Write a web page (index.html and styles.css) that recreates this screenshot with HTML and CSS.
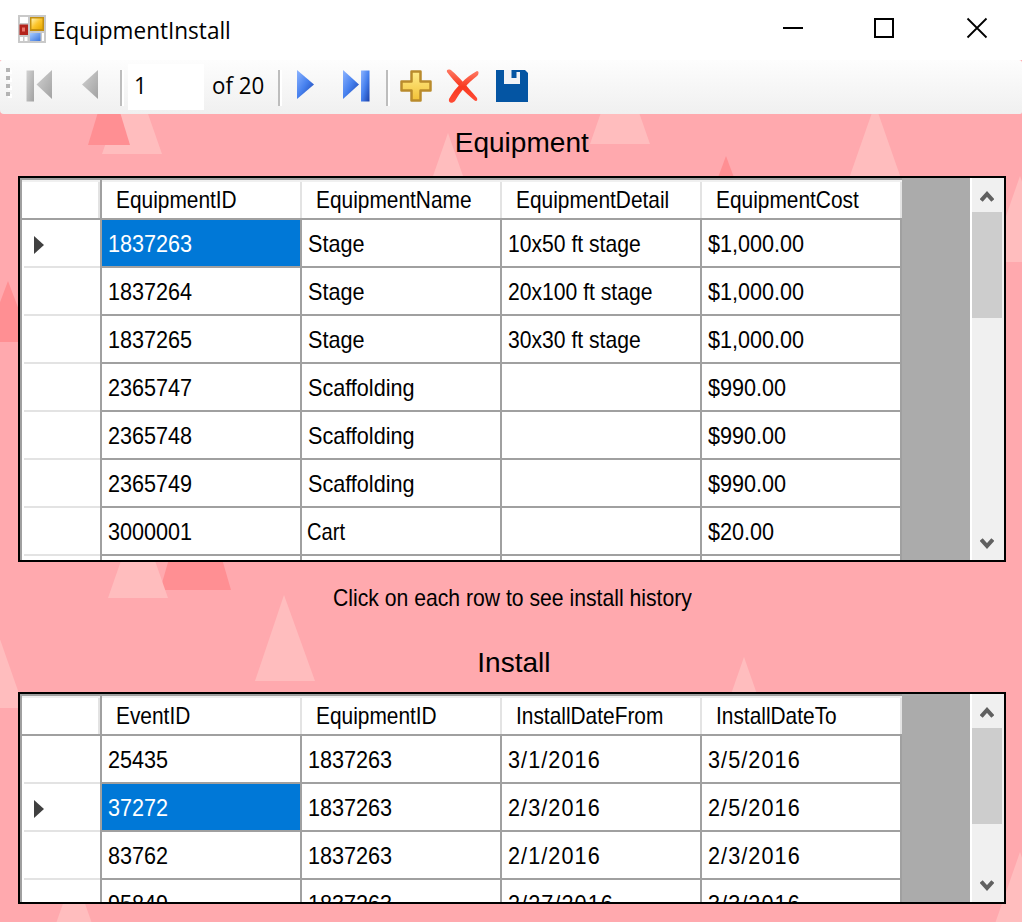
FILE: index.html
```html
<!DOCTYPE html>
<html lang="en">
<head>
<meta charset="utf-8">
<title>EquipmentInstall</title>
<link rel="stylesheet" href="styles.css">
</head>
<body>
<div class="window">
  <svg class="backdrop" width="1022" height="922" viewBox="0 0 1022 922" aria-hidden="true">
    <g fill="#ffbdbe">
      <path d="M132 68L162 154H102Z"/><path d="M448 133L478 219H418Z"/><path d="M620 58L650 144H590Z"/>
      <path d="M875 104L905 190H845Z"/><path d="M1020 176L1050 262H990Z"/><path d="M-6 622L24 708H-36Z"/>
      <path d="M284 595L315 681H255Z"/><path d="M744 657L774 743H714Z"/><path d="M74 872L104 958H44Z"/>
      <path d="M1020 852L1050 938H990Z"/>
    </g>
    <g fill="#ff8f93">
      <path d="M109 76L130 145H88Z"/><path d="M726 156L746 210H706Z"/><path d="M8 281L31 342H-15Z"/>
      <path d="M195.500 467L231 590H160Z"/>
    </g>
    <path fill="#ffbdbe" d="M138 512L168 598H108Z"/>
  </svg>

  <header class="titlebar">
    <svg class="app-icon" width="28" height="28" viewBox="0 0 28 28">
      <defs>
        <linearGradient id="gold" x2="1" y2="1"><stop offset="0" stop-color="#fff3b0"/><stop offset=".5" stop-color="#fcc52c"/><stop offset="1" stop-color="#e5a800"/></linearGradient>
        <linearGradient id="sky" x2="1" y2="1"><stop offset="0" stop-color="#a8ccff"/><stop offset="1" stop-color="#3a74dc"/></linearGradient>
      </defs>
      <rect width="28" height="28" fill="#c9c9c9"/>
      <path fill="#fff" d="M2 2h8v6H2zM2 22h3v4H2zM6.500 22h3v4h-3zM24 18h2v8h-2z"/>
      <rect x="1.500" y="9.500" width="8.500" height="10.500" fill="#b3231b"/><rect x="4" y="12.500" width="3" height="4" fill="#e8756b"/>
      <rect x="12" y="2" width="14" height="14" fill="#c4900f"/><rect x="13.500" y="3.500" width="11" height="10.500" fill="url(#gold)"/>
      <rect x="12" y="18" width="10.500" height="8" fill="url(#sky)"/>
    </svg>
    <h1 class="title"><span>EquipmentInstall</span></h1>
    <div class="window-controls">
      <svg width="22" height="22" viewBox="0 0 22 22"><path d="M1 11H21" stroke="#000" stroke-width="2"/></svg>
      <svg width="22" height="22" viewBox="0 0 22 22"><rect x="2" y="2" width="18" height="18" fill="none" stroke="#000" stroke-width="2"/></svg>
      <svg class="close" width="22" height="22" viewBox="0 0 22 22"><path d="M1.500 1.500L20.500 20.500M20.500 1.500L1.500 20.500" stroke="#000" stroke-width="1.800"/></svg>
    </div>
  </header>

  <nav class="toolbar">
    <svg class="grip" width="6" height="30" viewBox="0 0 6 30"><path fill="#fff" d="M2 2h4v4H2zM2 10h4v4H2zM2 18h4v4H2zM2 26h4v4H2z"/><path fill="#b4b4b4" d="M0 0h4v4H0zM0 8h4v4H0zM0 16h4v4H0zM0 24h4v4H0z"/></svg>
    <svg class="first" width="26" height="32" viewBox="0 0 26 32">
      <defs><linearGradient id="gray" x2="1" y2="1"><stop offset="0" stop-color="#d2d2d2"/><stop offset="1" stop-color="#a2a2a2"/></linearGradient></defs>
      <rect x=".5" y=".5" width="7.500" height="31" fill="url(#gray)"/><path d="M26 0V29L10.500 14.500Z" fill="url(#gray)"/>
    </svg>
    <svg class="prev" width="16" height="29" viewBox="0 0 16 29"><path d="M16 0V29L0 14.500Z" fill="url(#gray)"/></svg>
    <i class="divider d1"></i>
    <span class="page-input"><span>1</span></span>
    <span class="page-total"><span>of 20</span></span>
    <i class="divider d2"></i>
    <svg class="next" width="17" height="29" viewBox="0 0 17 29">
      <defs><linearGradient id="blue" x2="1" y2="1"><stop offset="0" stop-color="#8db4ff"/><stop offset=".5" stop-color="#4680ee"/><stop offset="1" stop-color="#1a3fa8"/></linearGradient></defs>
      <path d="M0 0L17 14.500L0 29Z" fill="url(#blue)"/>
    </svg>
    <svg class="last" width="28" height="32" viewBox="0 0 28 32"><path d="M1 0L17 14.500L1 29Z" fill="url(#blue)"/><rect x="19" y=".5" width="8.500" height="31" fill="url(#blue)"/></svg>
    <i class="divider d3"></i>
    <svg class="add" width="32" height="32" viewBox="0 0 32 32">
      <defs><linearGradient id="plus" x2="0" y2="1"><stop offset="0" stop-color="#ffeb8a"/><stop offset="1" stop-color="#f2c136"/></linearGradient></defs>
      <path d="M11.500 1.500h9v10h10v9h-10v10h-9v-10h-10v-9h10z" fill="url(#plus)" stroke="#b98b2c" stroke-width="2.500" stroke-linejoin="round"/>
    </svg>
    <svg class="delete" width="34" height="36" viewBox="0 0 34 36">
      <defs><linearGradient id="red" x2="0" y2="1"><stop offset="0" stop-color="#ff7a64"/><stop offset=".5" stop-color="#f83a20"/><stop offset="1" stop-color="#ff4a34"/></linearGradient></defs>
      <path d="M1 4C0 1 4 1 6 3C13 9 20 17 31 30C32 33 30 34 28 32C20 25 9 15 1 4Z" fill="url(#red)"/>
      <path d="M31 3C33 3 33 6 31 8C22 15 14 24 9 33C6 36 2 35 3 31C9 20 20 9 31 3Z" fill="url(#red)"/>
    </svg>
    <svg class="save" width="32" height="32" viewBox="0 0 32 32"><path d="M0 0H29L32 3V32H0Z" fill="#0455a3"/><path d="M8 0H15.500V8H20.500V2H24V14H8Z" fill="#f1f3f6"/></svg>
  </nav>

  <main class="content">
    <h2 class="heading"><span>Equipment</span></h2>
    <section class="grid grid-equipment">
      <div class="sheet">
        <div class="row head"><b></b><b><span>EquipmentID</span></b><b><span>EquipmentName</span></b><b><span>EquipmentDetail</span></b><b><span>EquipmentCost</span></b></div>
        <div class="row"><i><svg width="10" height="18" viewBox="0 0 10 18"><path d="M0 0L10 9L0 18Z" fill="#404040"/></svg></i><p class="selected"><span>1837263</span></p><p><span>Stage</span></p><p class="detail"><span>10x50 ft stage</span></p><p><span>$1,000.00</span></p></div>
        <div class="row"><i></i><p><span>1837264</span></p><p><span>Stage</span></p><p class="detail"><span>20x100 ft stage</span></p><p><span>$1,000.00</span></p></div>
        <div class="row"><i></i><p><span>1837265</span></p><p><span>Stage</span></p><p class="detail"><span>30x30 ft stage</span></p><p><span>$1,000.00</span></p></div>
        <div class="row"><i></i><p><span>2365747</span></p><p><span>Scaffolding</span></p><p></p><p><span>$990.00</span></p></div>
        <div class="row"><i></i><p><span>2365748</span></p><p><span>Scaffolding</span></p><p></p><p><span>$990.00</span></p></div>
        <div class="row"><i></i><p><span>2365749</span></p><p><span>Scaffolding</span></p><p></p><p><span>$990.00</span></p></div>
        <div class="row"><i></i><p><span>3000001</span></p><p class="cart"><span>Cart</span></p><p></p><p><span>$20.00</span></p></div>
        <div class="row"><i></i><p></p><p></p><p></p><p></p></div>
      </div>
      <div class="scrollbar">
        <svg width="14" height="12" viewBox="0 0 14 12"><path d="M1.200 10.500L7 4L12.800 10.500" fill="none" stroke="#606060" stroke-width="4"/></svg>
        <div class="thumb"></div>
        <svg class="down" width="14" height="12" viewBox="0 0 14 12"><path d="M1.200 1.500L7 8L12.800 1.500" fill="none" stroke="#606060" stroke-width="4"/></svg>
      </div>
    </section>
    <p class="hint"><span>Click on each row to see install history</span></p>
    <h2 class="heading install"><span>Install</span></h2>
    <section class="grid grid-install">
      <div class="sheet">
        <div class="row head"><b></b><b><span>EventID</span></b><b><span>EquipmentID</span></b><b><span>InstallDateFrom</span></b><b><span>InstallDateTo</span></b></div>
        <div class="row"><i></i><p><span>25435</span></p><p><span>1837263</span></p><p class="date"><span>3/1/2016</span></p><p class="date"><span>3/5/2016</span></p></div>
        <div class="row"><i><svg width="10" height="18" viewBox="0 0 10 18"><path d="M0 0L10 9L0 18Z" fill="#404040"/></svg></i><p class="selected"><span>37272</span></p><p><span>1837263</span></p><p class="date"><span>2/3/2016</span></p><p class="date"><span>2/5/2016</span></p></div>
        <div class="row"><i></i><p><span>83762</span></p><p><span>1837263</span></p><p class="date"><span>2/1/2016</span></p><p class="date"><span>2/3/2016</span></p></div>
        <div class="row"><i></i><p><span>95849</span></p><p><span>1837263</span></p><p class="date"><span>2/27/2016</span></p><p class="date"><span>3/3/2016</span></p></div>
      </div>
      <div class="scrollbar">
        <svg width="14" height="12" viewBox="0 0 14 12"><path d="M1.200 10.500L7 4L12.800 10.500" fill="none" stroke="#606060" stroke-width="4"/></svg>
        <div class="thumb"></div>
        <svg class="down" width="14" height="12" viewBox="0 0 14 12"><path d="M1.200 1.500L7 8L12.800 1.500" fill="none" stroke="#606060" stroke-width="4"/></svg>
      </div>
    </section>
  </main>
</div>
</body>
</html>
```
FILE: styles.css
```css
* { box-sizing: border-box; margin: 0; padding: 0; }
body { width: 1022px; height: 922px; overflow: hidden; font-family: "Liberation Sans", Arial, sans-serif; color: #000; }
svg { display: block; flex: none; }
h1, h2, b { font-weight: 400; }
.window { position: relative; width: 1022px; height: 922px; overflow: hidden; background: #ffa9ae; }
.backdrop { position: absolute; inset: 0; }
.titlebar, .toolbar, .content { position: relative; }

.titlebar { height: 60px; background: #fff; display: flex; align-items: flex-start; padding: 15px 34px 0 18px; }
.title { margin-left: 7px; font: 400 23px/31px "Open Sans", sans-serif; white-space: nowrap; }
.title span { display: inline-block; transform: scaleX(.98); transform-origin: 0 0; }
.window-controls { display: flex; gap: 69px; margin: 2px 0 0 auto; }
.close { margin-left: 2px; }

.toolbar { height: 54px; display: flex; align-items: flex-start; background: linear-gradient(#fdfdfd, #f0f0f0); border-radius: 2px 3px 2px 4px; font: 23px/42px "Open Sans", sans-serif; }
.grip { margin: 8px 0 0 6px; }
.first { margin: 10px 0 0 14px; }
.prev { margin: 10px 0 0 30px; }
.divider { flex: none; width: 4px; height: 36px; margin-top: 10px; background: linear-gradient(90deg, #bdbdbd 2px, #fff 2px); }
.d1 { margin-left: 22px; }
.page-input { width: 76px; height: 46px; margin: 4px 0 0 4px; padding-left: 6px; background: #fff; }
.page-total { width: 66px; margin: 4px 0 0 8px; white-space: nowrap; }
.page-input span, .page-total span { display: inline-block; transform: scaleX(.97); transform-origin: 0 0; }
.next { margin: 10px 0 0 15px; }
.last { margin: 10px 0 0 28px; }
.d3 { margin-left: 16px; }
.add { margin: 10px 0 0 10px; }
.delete { margin: 8px 0 0 14px; }
.save { margin: 10px 0 0 16px; }

.content { padding: 0 16px 0 18px; }
.heading { height: 62px; padding: 12px 0 0 19px; text-align: center; font-size: 27.500px; line-height: 34px; }
.heading span { display: inline-block; transform: scaleX(1.02); }
.grid { display: flex; justify-content: space-between; width: 988px; border: 2px solid #000; background: #ababab; overflow: hidden; }
.grid-equipment { height: 386px; }
.grid-install { height: 212px; }
.sheet { width: 882px; border: solid #a0a0a0; border-width: 2px 0 0 2px; background: #fff; }
.row { display: grid; grid-template-columns: 80px repeat(4, 200px); height: 48px; font-size: 24px; line-height: 48px; }
.row > * { border: solid #a0a0a0; border-width: 0 2px 2px 0; padding-left: 6px; white-space: nowrap; overflow: hidden; }
.row > i { border-bottom-width: 0; padding: 16px 0 0 12px; background: linear-gradient(#e3e3e3, #e3e3e3) 2px 100% / 100% 2px no-repeat; }
.row span, .hint span { display: inline-block; transform: scaleX(.9); transform-origin: 0 0; }
.row .detail span { transform: scaleX(.88); }
.row .date span { transform: scaleX(.9); letter-spacing: 1.200px; }
.row .cart { padding-left: 5px; }
.row .cart span { transform: scaleX(.84); }
.head { height: 40px; }
.head > * { padding-left: 14px; border-right-width: 0; line-height: 39px; background: linear-gradient(#f0f0f0, #f0f0f0) 0 0 / 100% 2px no-repeat, linear-gradient(#e3e3e3, #e3e3e3) 100% 0 / 2px 100% no-repeat; }
.head > :first-child { border-right-width: 2px; }
.row.head span { transform: scaleX(.87); }
.selected { background: #0078d7; color: #fff; }

.scrollbar { display: flex; flex-direction: column; width: 34px; border-left: 2px solid #fff; background: #f0f0f0; padding: 12px 0 10px; }
.scrollbar svg { margin-left: 8px; }
.thumb { width: 30px; height: 106px; margin-top: 10px; background: #cdcdcd; }
.grid-install .thumb { height: 96px; }
.scrollbar .down { margin-top: auto; }

.hint { height: 84px; padding-top: 20px; font-size: 24px; line-height: 32px; text-align: center; }
.hint span { transform: scaleX(.882); transform-origin: 50% 0; }
.install { height: 46px; padding: 0 0 0 4px; }
```
